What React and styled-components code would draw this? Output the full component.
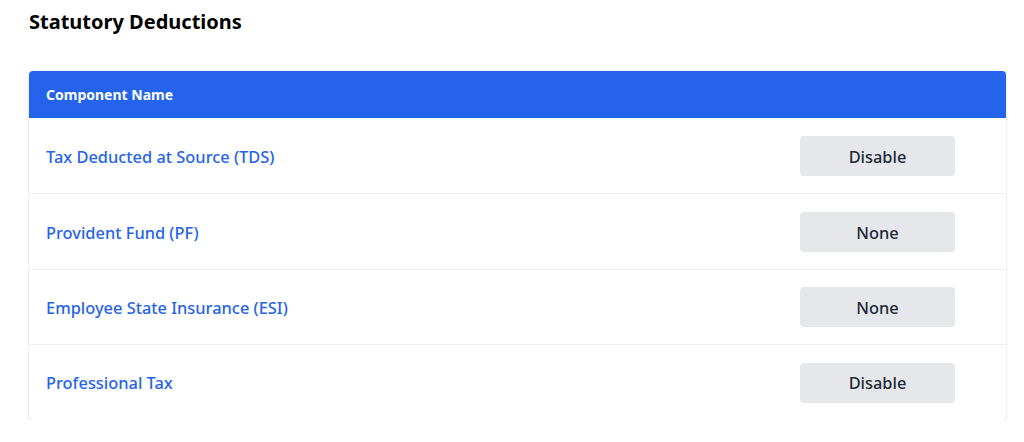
import React from "react";
import styled, { createGlobalStyle } from "styled-components";

const Global = createGlobalStyle`
  html, body { margin: 0; padding: 0; background: #ffffff; }
  body { font-family: "Noto Sans", "Open Sans", sans-serif; }
`;

const Page = styled.div`
  padding: 8px 18px 0 29px;
`;

const Title = styled.h2`
  margin: 0;
  font-size: 20px;
  line-height: 28px;
  font-weight: 700;
  color: #000;
`;

const Card = styled.div`
  margin-top: 35px;
  background: #fff;
  border-radius: 4px;
  box-shadow: 0 1px 3px rgba(0, 0, 0, 0.12), 0 1px 2px rgba(0, 0, 0, 0.06);
  overflow: hidden;
`;

const Header = styled.div`
  height: 47px;
  background: #2563eb;
  display: flex;
  align-items: center;
  padding: 0 17px;
  color: #fff;
  font-size: 14px;
  font-weight: 700;
`;

const Row = styled.div`
  box-sizing: border-box;
  display: flex;
  align-items: center;
  justify-content: space-between;
  height: 75.4px;
  padding: 1px 51px 0 17px;
  border-top: ${(p) => (p.$first ? "none" : "1px solid #eceef1")};
`;

const Name = styled.span`
  color: #2563eb;
  font-size: 16.4px;
  font-weight: 500;
`;

const Button = styled.button`
  width: 155px;
  height: 40px;
  border: none;
  border-radius: 4px;
  background: #e5e7eb;
  color: #1f2937;
  font-family: inherit;
  font-size: 16.4px;
  font-weight: 500;
  cursor: pointer;
`;

const rows = [
  ["Tax Deducted at Source (TDS)", "Disable"],
  ["Provident Fund (PF)", "None"],
  ["Employee State Insurance (ESI)", "None"],
  ["Professional Tax", "Disable"],
];

export default function App() {
  return (
    <>
      <Global />
      <Page>
        <Title>Statutory Deductions</Title>
        <Card>
          <Header>Component Name</Header>
          {rows.map(([n, v], i) => (
            <Row key={n} $first={i === 0}>
              <Name>{n}</Name>
              <Button>{v}</Button>
            </Row>
          ))}
        </Card>
      </Page>
    </>
  );
}
